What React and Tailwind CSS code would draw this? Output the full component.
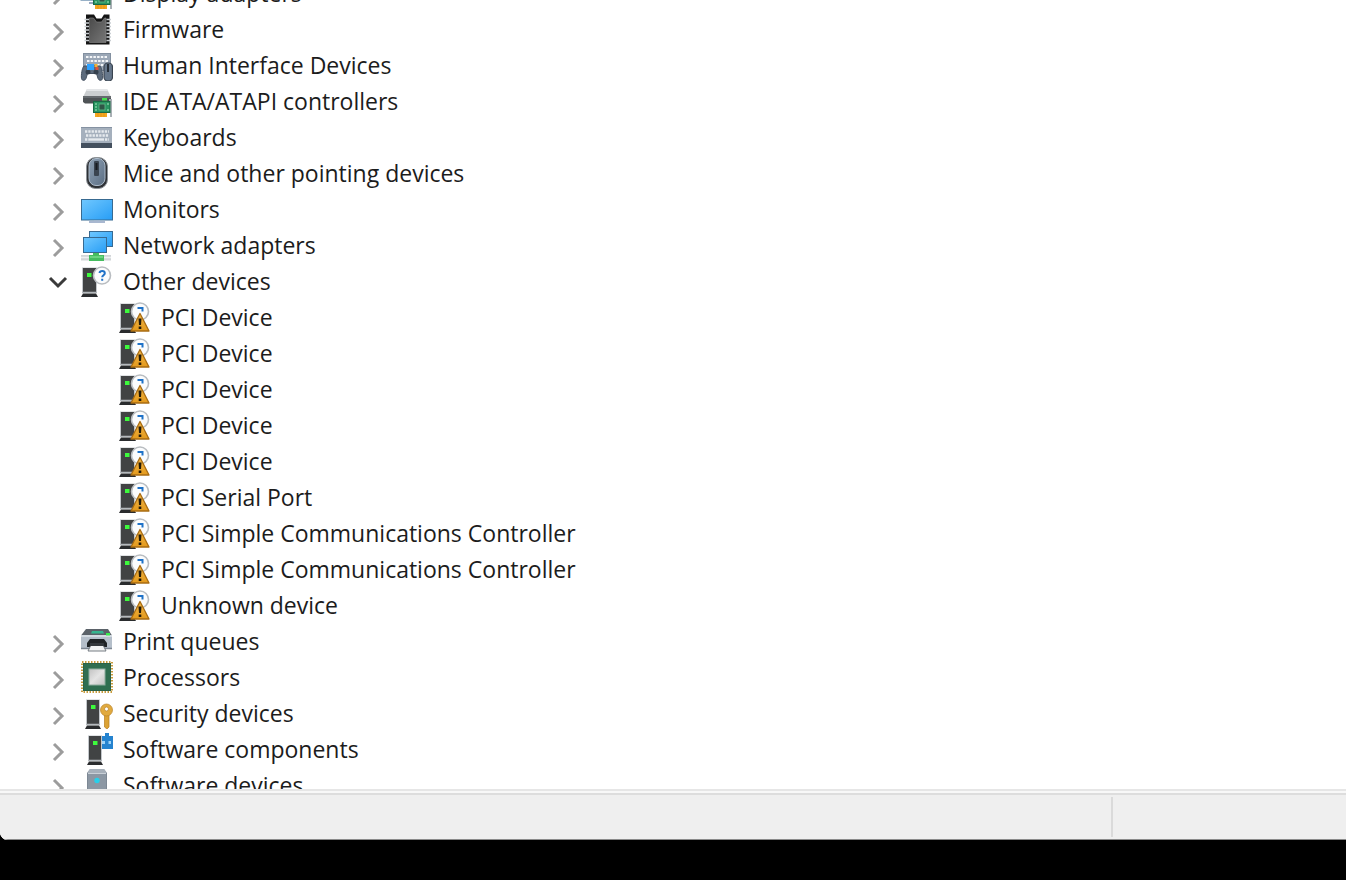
import React, { useState } from "react";

// Expansion card shared by the display and IDE icons
function Card() {
  return (
    <g>
      <path d="M29 14h3v18h-2V16h-1z" fill="#a9b0b5" />
      <rect x="15" y="27" width="12" height="5" fill="#f5a71f" />
      <path d="M18 28v4M21 28v4M24 28v4" stroke="#d98c17" strokeWidth="0.6" />
      <rect x="13.5" y="16.5" width="16.5" height="11" fill="#2a9461" stroke="#1a6a45" />
      <rect x="19" y="19" width="6" height="6" fill="#2f5546" stroke="#5fbf8b" strokeWidth="0.8" />
      <path d="M15 19h2M15 22h2M15 25h2M27 19h2M27 25h2" stroke="#a5e8bd" strokeWidth="1.2" />
    </g>
  );
}

// Tower with a green light
function Tower({ x = 3, led = 7, width = 13 }) {
  return (
    <g>
      <path d={`M${x - 1} 28V2.500h${width + 2}V28`} fill="#c3c7cb" />
      <rect x={x} y="3" width={width} height="25" fill="#414344" />
      <path d={`M${x - 1} 27.500h${width + 2}`} stroke="#b4b9bd" strokeWidth="1.5" />
      <path d={`M${x} 28.500h${width}l2 3.500H${x - 2}z`} fill="#2a2c2e" />
      <rect x={led} y="8" width="4.500" height="4" fill="#3dfa3d" />
    </g>
  );
}

const shapes = {
  display: (
    <>
      <rect x="1" y="3" width="28" height="20" fill="#3f9fe8" stroke="#33658f" />
      <path d="M9 26h8" stroke="#9aa9c0" strokeWidth="2" />
      <Card />
    </>
  ),
  firmware: (
    <>
      <path d="M6 1.500h8l2.500 4h5l2.500-4h5.500v30H6z" fill="#141414" />
      <path d="M9.500 5h4l3 4h5l3-4H26v24.500H9.500z" fill="url(#chip)" stroke="#8a8a8a" strokeWidth="0.6" />
      <path
        d="M4.500 6.500H9M4.500 10H9M4.500 13.500H9M4.500 17H9M4.500 20.500H9M4.500 24H9M4.500 27.500H9M26.500 6.500H31M26.500 10H31M26.500 13.500H31M26.500 17H31M26.500 20.500H31M26.500 24H31M26.500 27.500H31"
        stroke="#c9ced2"
        strokeWidth="1.6"
      />
    </>
  ),
  hid: (
    <>
      <rect x="3.500" y="4.500" width="27" height="17" fill="#9ba7b6" stroke="#8390a0" />
      <path d="M6 8h22M7 12h22M6 16h22" stroke="#f4f6f8" strokeWidth="2" strokeDasharray="2.500 1.200" />
      <rect x="24" y="14" width="8.500" height="18" rx="4" fill="#66778b" stroke="#3a4450" strokeWidth="1.200" />
      <path d="M28 15v8" stroke="#252d37" strokeWidth="2" />
      <path
        d="M4 17h3l2-1h6l2 1h3c2 2 3 9 2.500 12.500-.500 2.500-3.500 2.500-4.500 0l-1.500-5h-9l-1.500 5c-1 2.500-4 2.500-4.500 0C1 26 2 19 4 17z"
        fill="#5d6b7c"
        stroke="#465261"
      />
      <circle cx="8" cy="23" r="2.500" fill="#36414e" />
      <circle cx="16" cy="23" r="2.500" fill="#36414e" />
      <rect x="7" y="15" width="7" height="6" fill="#2ea1ff" />
      <rect x="14.500" y="15" width="3" height="3" fill="#f2b136" />
      <rect x="15.500" y="18" width="3" height="3" fill="#e0543a" />
    </>
  ),
  ide: (
    <>
      <path d="M7 4h20l4 8H3z" fill="#cbced0" />
      <path d="M7 4h20l1 2H6z" fill="#e4e6e8" />
      <path d="M3 11h28v6l-2 1.500H5L3 17z" fill="#4f5356" />
      <path d="M3 12h28" stroke="#7e8387" />
      <rect x="22" y="13" width="5" height="2.500" fill="#42e04d" />
      <Card />
    </>
  ),
  keyboard: (
    <>
      <rect x="1" y="6" width="31" height="17" fill="#a5b0bd" />
      <rect x="1" y="22" width="31" height="5" fill="#44505e" />
      <path d="M1 6.500h31" stroke="#8592a2" />
      <path d="M5 10.500h24M6 14.500h23M5 18.500h4M25 18.500h4" stroke="#e6eaee" strokeWidth="2.400" strokeDasharray="2.300 1" />
      <path d="M9 18.500h15" stroke="#e6eaee" strokeWidth="2.400" />
    </>
  ),
  mouse: (
    <>
      <rect x="6.500" y="0.500" width="21" height="31" rx="9" fill="#2e3135" stroke="#8d9297" />
      <rect x="9" y="1.500" width="16" height="27" rx="7" fill="url(#mouse)" stroke="#adbccb" />
      <rect x="14" y="4" width="5" height="15" rx="1" fill="#3a4450" />
      <rect x="15.500" y="6" width="2" height="7" fill="#171b20" />
    </>
  ),
  monitor: (
    <>
      <rect x="1.500" y="6.500" width="31" height="20.500" fill="url(#screen)" stroke="#386a91" />
      <path d="M14 27.500h6V28h5v2H9v-2h5z" fill="#a9b8d0" />
    </>
  ),
  network: (
    <>
      <rect x="9.500" y="2.500" width="23" height="15" fill="url(#screen)" stroke="#386a91" />
      <rect x="3.500" y="8.500" width="23" height="15" fill="url(#screen)" stroke="#386a91" />
      <rect x="1" y="26" width="30" height="5.500" fill="#d2d5d8" />
      <path d="M1 28.500h30" stroke="#eff1f2" strokeWidth="1.500" />
      <path d="M13 24h6v2h5v6H9v-6h4z" fill="#46bd60" />
      <path d="M10 28h13" stroke="#79dd8b" strokeWidth="1.500" />
    </>
  ),
  other: (
    <>
      <Tower />
      <circle cx="22" cy="10.500" r="8.500" fill="#fbfcfd" stroke="#b9bdc1" strokeWidth="1.600" />
      <path
        d="M19.500 8c.400-2.600 5.200-2.800 5.300.200 0 2-2.600 2-2.600 4M22.200 13.800v2"
        fill="none"
        stroke="#1f72c8"
        strokeWidth="2"
      />
    </>
  ),
  unknown: (
    <>
      <Tower />
      <circle cx="22" cy="10.500" r="8.500" fill="#fbfcfd" stroke="#b9bdc1" strokeWidth="1.600" />
      <path d="M19.500 7h5v3.500" fill="none" stroke="#1f72c8" strokeWidth="2" />
      <path d="M22 12.500L31 30H13z" fill="url(#warn)" stroke="#a86c13" strokeWidth="1.300" strokeLinejoin="round" />
      <path d="M20.500 17.500h3l-.500 6.500h-2zM20.700 25.500h2.600V28h-2.600z" fill="#241a08" />
    </>
  ),
  printer: (
    <>
      <path d="M6 4h22l4 6.500H1z" fill="#5b6269" />
      <path d="M12 6h11l1 2.500H11z" fill="#35b58f" />
      <rect x="1" y="10" width="31" height="14" fill="#b5bfca" />
      <path d="M1 11h31" stroke="#d3dae1" strokeWidth="2" />
      <path d="M1 23.500h31" stroke="#7d8792" strokeWidth="1.500" />
      <rect x="26" y="8" width="4" height="2.500" fill="#3aec4d" />
      <path d="M10 14h14l3 4v4H7v-4z" fill="#1f2326" />
      <path d="M11 20h12l3 6H8z" fill="#f1f3f4" stroke="#777d83" />
      <path d="M10 18h14v3H10z" fill="#33383c" />
    </>
  ),
  processor: (
    <>
      <rect x="2" y="1" width="30" height="30" fill="none" stroke="#c79c3e" strokeWidth="2" strokeDasharray="1.500 1.500" />
      <rect x="3.500" y="2.500" width="27" height="27" fill="#2f6e50" stroke="#2a6248" />
      <rect x="9" y="8" width="16" height="16" fill="url(#die)" stroke="#8fae9f" />
    </>
  ),
  security: (
    <>
      <Tower x={7} led={11} width={12} />
      <path d="M24.500 17h4.500v13l-2 2-2.500-2z" fill="#dca335" stroke="#b77e21" strokeWidth="0.700" />
      <path
        d="M26.500 7a6 6 0 1 1 0 12 6 6 0 0 1 0-12zm0 3a2 2 0 1 0 0 4 2 2 0 0 0 0-4z"
        fill="#e1aa3f"
        stroke="#b98328"
        strokeWidth="0.700"
        fillRule="evenodd"
      />
    </>
  ),
  component: (
    <>
      <path d="M20 3h5V0h4v3h4v13H20z" fill="#2583cf" />
      <path d="M21.500 8h3.500v3h-3.500zM28.500 8H31v3h-2.500z" fill="#9ed3f8" />
      <Tower x={9} led={13} width={12} />
    </>
  ),
  software: (
    <>
      <path d="M10 0h14l3 4v28H7V4z" fill="#8c97a3" />
      <path d="M10 0h14l3 4H7z" fill="#a7b0ba" />
      <path d="M7 4.500h20" stroke="#c9d0d7" />
      <path d="M7.500 4v28M26.500 4v28" stroke="#7d8894" />
      <circle cx="17" cy="11.500" r="2.700" fill="#27d0ea" />
    </>
  ),
};

// Gradients used by the icons
function Gradients() {
  return (
    <svg className="absolute size-0" aria-hidden="true">
      <defs>
        <linearGradient id="screen" x1="0" y1="0" x2="1" y2="1">
          <stop offset="0" stopColor="#70c8ff" />
          <stop offset="1" stopColor="#279df5" />
        </linearGradient>
        <linearGradient id="chip" x1="0" y1="0" x2="1" y2="1">
          <stop offset="0" stopColor="#4a4a4a" />
          <stop offset="1" stopColor="#777777" />
        </linearGradient>
        <linearGradient id="mouse" x1="0" y1="0" x2="1" y2="1">
          <stop offset="0" stopColor="#8ea1b5" />
          <stop offset="1" stopColor="#5b6e83" />
        </linearGradient>
        <linearGradient id="warn" x1="0" y1="0" x2="0" y2="1">
          <stop offset="0" stopColor="#f3b648" />
          <stop offset="1" stopColor="#e39a1d" />
        </linearGradient>
        <linearGradient id="die" x1="0" y1="0" x2="1" y2="1">
          <stop offset="0" stopColor="#c2c2c2" />
          <stop offset="0.500" stopColor="#e4e4e4" />
          <stop offset="1" stopColor="#c0c0c0" />
        </linearGradient>
      </defs>
    </svg>
  );
}

function DeviceIcon({ name }) {
  return (
    <svg viewBox="0 0 33 32" className="h-8 w-[33px] shrink-0" aria-hidden="true">
      {shapes[name]}
    </svg>
  );
}

const categories = [
  { label: "Display adapters", icon: "display" },
  { label: "Firmware", icon: "firmware" },
  { label: "Human Interface Devices", icon: "hid" },
  { label: "IDE ATA/ATAPI controllers", icon: "ide" },
  { label: "Keyboards", icon: "keyboard" },
  { label: "Mice and other pointing devices", icon: "mouse" },
  { label: "Monitors", icon: "monitor" },
  { label: "Network adapters", icon: "network" },
  {
    label: "Other devices",
    icon: "other",
    devices: [
      "PCI Device",
      "PCI Device",
      "PCI Device",
      "PCI Device",
      "PCI Device",
      "PCI Serial Port",
      "PCI Simple Communications Controller",
      "PCI Simple Communications Controller",
      "Unknown device",
    ],
  },
  { label: "Print queues", icon: "printer" },
  { label: "Processors", icon: "processor" },
  { label: "Security devices", icon: "security" },
  { label: "Software components", icon: "component" },
  { label: "Software devices", icon: "software" },
];

function Category({ category, open, onToggle }) {
  return (
    <li>
      <div className="flex h-9 items-center">
        <button
          type="button"
          aria-label={`Toggle ${category.label}`}
          aria-expanded={open}
          onClick={onToggle}
          className="mr-3 flex h-9 w-5 items-center justify-center"
        >
          {open ? (
            <svg viewBox="0 0 20 36" className="h-9 w-5" fill="none" stroke="#3a3a3a" strokeWidth="3">
              <path d="M2 15l8 8 8-8" />
            </svg>
          ) : (
            <svg viewBox="0 0 20 36" className="h-9 w-5" fill="none" stroke="#9c9c9c" strokeWidth="3">
              <path d="M6 13l8 8-8 8" />
            </svg>
          )}
        </button>
        <DeviceIcon name={category.icon} />
        <span className="ml-2.5 whitespace-nowrap">{category.label}</span>
      </div>
      {open && category.devices && (
        <ul>
          {category.devices.map((device, index) => (
            <li key={index} className="flex h-9 items-center pl-[70px]">
              <DeviceIcon name="unknown" />
              <span className="ml-2.5 whitespace-nowrap">{device}</span>
            </li>
          ))}
        </ul>
      )}
    </li>
  );
}

export default function App() {
  const [opened, setOpened] = useState(["Other devices"]);

  const toggle = (label) => {
    if (opened.includes(label)) {
      setOpened(opened.filter((item) => item !== label));
    } else {
      setOpened([...opened, label]);
    }
  };

  return (
    <div className="h-screen overflow-hidden bg-black pb-10">
      <Gradients />
      <div className="flex h-full flex-col overflow-hidden rounded-bl-lg bg-white">
        {/* Device tree */}
        <main className="min-h-0 flex-1 overflow-hidden pl-12 font-['Open_Sans',sans-serif] text-[23px]/[34px] text-[#1c1c1c]">
          <ul className="-mt-[25px]">
            {categories.map((category) => (
              <Category
                key={category.label}
                category={category}
                open={opened.includes(category.label)}
                onToggle={() => toggle(category.label)}
              />
            ))}
          </ul>
        </main>

        {/* Status bar */}
        <footer className="border-t-2 border-[#e6e6e6] bg-[#f8f8f8] pt-0.5">
          <div className="flex h-[47px] border-t-2 border-b border-t-[#dddddd] border-b-[#8a8a8a] bg-[#efefef] py-0.5">
            <div className="flex-1 border-r-2 border-[#dadada]" />
            <div className="w-[233px]" />
          </div>
        </footer>
      </div>
    </div>
  );
}
